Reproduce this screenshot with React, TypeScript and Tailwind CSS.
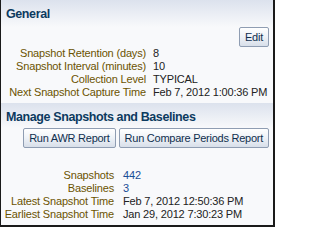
import React from "react";

const Btn = ({ children }: { children: React.ReactNode }) => (
  <button className="h-[20px] px-[5px] border border-[#8f9db2] rounded-[2px] bg-gradient-to-b from-[#ffffff] via-[#eef2f7] to-[#d8dfe9] text-[#102f4e] text-[11px] leading-[18px] tracking-[-0.25px] whitespace-nowrap">
    {children}
  </button>
);

export default function App() {
  const rows1: [string, string][] = [
    ["Snapshot Retention (days)", "8"],
    ["Snapshot Interval (minutes)", "10"],
    ["Collection Level", "TYPICAL"],
    ["Next Snapshot Capture Time", "Feb 7, 2012 1:00:36 PM"],
  ];
  const rows2: [string, string, boolean][] = [
    ["Snapshots", "442", true],
    ["Baselines", "3", true],
    ["Latest Snapshot Time", "Feb 7, 2012 12:50:36 PM", false],
    ["Earliest Snapshot Time", "Jan 29, 2012 7:30:23 PM", false],
  ];
  return (
    <div className="w-[275px] h-[227px] border-l border-r-2 border-b-2 border-[#1a1a1a] bg-[#f8f9fb] text-[11px] leading-[13px] tracking-[-0.17px] font-['Tahoma','Liberation_Sans',sans-serif] flex flex-col overflow-hidden">
      <div className="h-[27px] pl-[5px] pt-[6px] bg-gradient-to-b from-[#dce2ed] to-[#f8f9fb]">
        <h2 className="text-[12.5px] leading-[16px] font-bold tracking-[-0.4px] text-[#0c3a5f]">General</h2>
      </div>
      <div className="flex justify-end pr-[4px]">
        <Btn>Edit</Btn>
      </div>
      <div className="grid grid-cols-[145px_auto] gap-x-[7px]">
        {rows1.map(([l, v]) => (
          <React.Fragment key={l}>
            <div className="text-right text-[#6b5300] whitespace-nowrap">{l}</div>
            <div className="text-[#222222] whitespace-nowrap">{v}</div>
          </React.Fragment>
        ))}
      </div>
      <div className="mt-[4px] h-[25px] pl-[5px] pt-[6px] bg-gradient-to-b from-[#dce2ed] to-[#f8f9fb]">
        <h2 className="text-[12.5px] leading-[16px] font-bold tracking-[-0.4px] text-[#0c3a5f]">Manage Snapshots and Baselines</h2>
      </div>
      <div className="flex justify-end gap-[3px] pr-[4px]">
        <Btn>Run AWR Report</Btn>
        <Btn>Run Compare Periods Report</Btn>
      </div>
      <div className="mt-[21px] grid grid-cols-[113px_auto] gap-x-[9px]">
        {rows2.map(([l, v, link]) => (
          <React.Fragment key={l}>
            <div className="text-right text-[#6b5300] whitespace-nowrap">{l}</div>
            <div className={(link ? "text-[#1a4e96]" : "text-[#222222]") + " whitespace-nowrap"}>{v}</div>
          </React.Fragment>
        ))}
      </div>
    </div>
  );
}
